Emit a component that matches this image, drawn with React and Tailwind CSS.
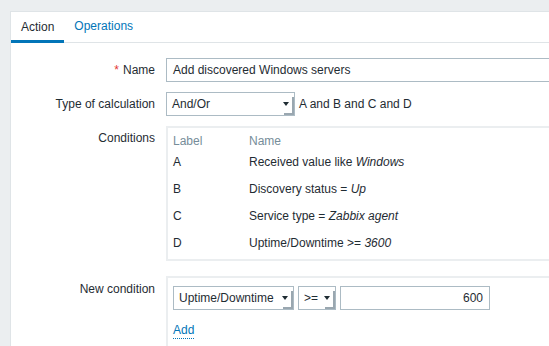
import React from 'react';

function Select({ value, width }) {
    return (
        <div className={`relative h-[24px] border border-[#acbbc4] bg-white pl-[5px] flex items-center ${width}`}>
            <span>{value}</span>
            <span className="absolute right-[5px] top-[9px] w-0 h-0 border-l-[3px] border-r-[3px] border-t-[4px] border-l-transparent border-r-transparent border-t-[#1f2c33]" />
            <span className="absolute right-0 bottom-0 w-[10px] h-[18px] border-r-2 border-b-2 border-[#9aa7b0]" />
        </div>
    );
}

export default function App() {
    const conditions = [
        { label: 'A', text: 'Received value like ', value: 'Windows' },
        { label: 'B', text: 'Discovery status = ', value: 'Up' },
        { label: 'C', text: 'Service type = ', value: 'Zabbix agent' },
        { label: 'D', text: 'Uptime/Downtime >= ', value: '3600' },
    ];

    return (
        <div
            className="h-[346px] w-[549px] overflow-hidden bg-[#ebeef0] pl-[10px] pt-[11px] text-[12px] text-[#1f2c33]"
            style={{ fontFamily: '"Liberation Sans", Arial, sans-serif' }}
        >
            <div className="h-full bg-white border-t border-l border-[#dfe4e7]">
                {/* tabs */}
                <div className="flex h-[31px] border-b border-[#dfe4e7]">
                    <div className="px-[10px] flex items-center border-b-[3px] border-[#0275b8] -mb-px pt-[1px]">Action</div>
                    <div className="px-[10px] flex items-center text-[#0275b8] pb-[2px]">Operations</div>
                </div>

                <div className="grid grid-cols-[144px_1fr] gap-x-[11px] pt-[15px]">
                    {/* Name */}
                    <div className="flex items-center justify-end h-[24px]">
                        <span className="text-[#e33734] mr-[4px]">*</span>Name
                    </div>
                    <div className="h-[24px] w-[460px] border border-[#acbbc4] pl-[6px] flex items-center">
                        Add discovered Windows servers
                    </div>

                    {/* Type of calculation */}
                    <div className="flex items-center justify-end h-[24px] mt-[10px]">Type of calculation</div>
                    <div className="flex items-center mt-[10px] gap-[4px]">
                        <Select value="And/Or" width="w-[129px]" />
                        <span>A and B and C and D</span>
                    </div>

                    {/* Conditions */}
                    <div className="text-right mt-[10px] pt-[3px]">Conditions</div>
                    <div className="mt-[10px] w-[460px] border-2 border-[#ebeef0] pt-[5px] pb-[3px] pl-[5px]">
                        <div className="flex h-[15px] items-center text-[#768d99]">
                            <span className="w-[76px]">Label</span>
                            <span>Name</span>
                        </div>
                        {conditions.map((c) => (
                            <div key={c.label} className="flex h-[27px] items-center">
                                <span className="w-[76px]">{c.label}</span>
                                <span>
                                    {c.text}
                                    <i>{c.value}</i>
                                </span>
                            </div>
                        ))}
                    </div>

                    {/* New condition */}
                    <div className="text-right mt-[16px] pt-[3px]">New condition</div>
                    <div className="mt-[15px] w-[460px] border-2 border-[#ebeef0] pt-[8px] pl-[5px] h-[80px]">
                        <div className="flex gap-[4px]">
                            <Select value="Uptime/Downtime" width="w-[121px]" />
                            <Select value=">=" width="w-[38px]" />
                            <div className="h-[24px] w-[150px] border border-[#acbbc4] flex items-center justify-end pr-[6px]">600</div>
                        </div>
                        <div className="mt-[11px]">
                            <span className="text-[#0275b8] border-b border-dotted border-[#0275b8] pb-[1px]">Add</span>
                        </div>
                    </div>
                </div>
            </div>
        </div>
    );
}
